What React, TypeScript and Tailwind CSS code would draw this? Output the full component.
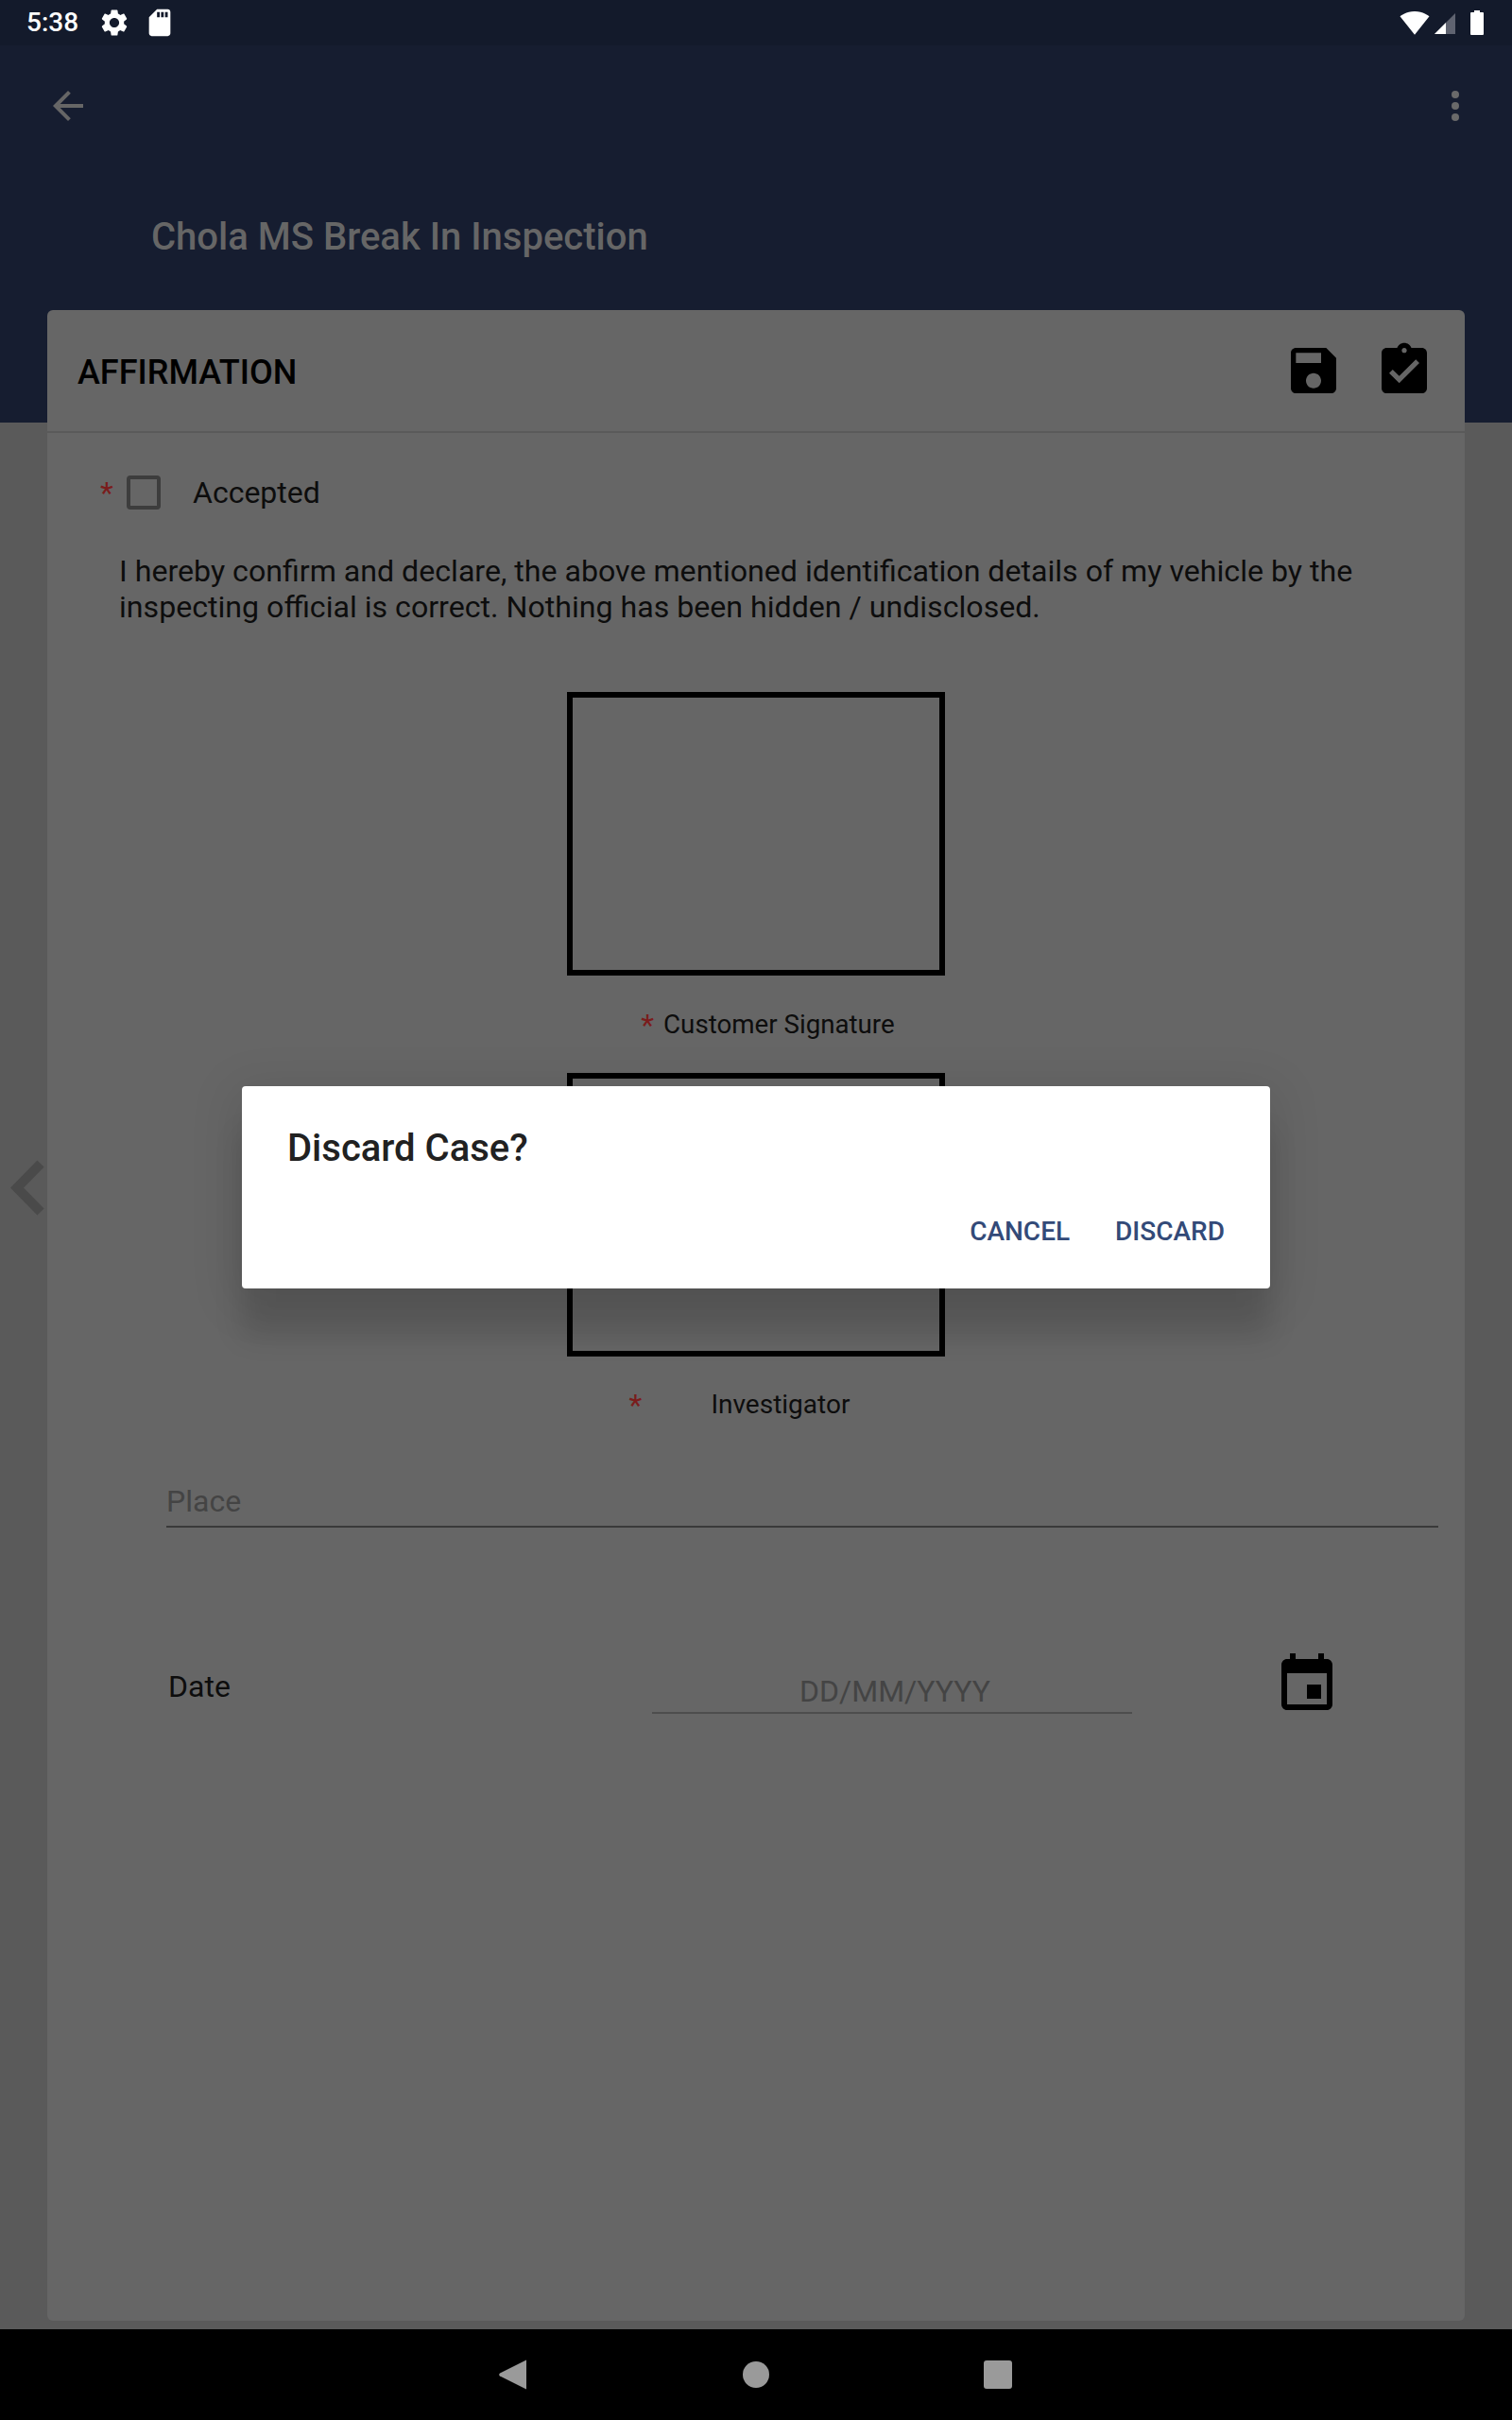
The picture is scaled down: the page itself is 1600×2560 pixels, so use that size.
import React from "react";

const Icon = ({ d, className }: { d: string; className: string }) => (
  <svg viewBox="0 0 24 24" className={className} fill="currentColor">
    <path d={d} />
  </svg>
);

const GEAR =
  "M19.14 12.94c.04-.3.06-.61.06-.94 0-.32-.02-.64-.07-.94l2.03-1.58c.18-.14.23-.41.12-.61l-1.92-3.32c-.12-.22-.37-.29-.59-.22l-2.39.96c-.5-.38-1.03-.7-1.62-.94l-.36-2.54c-.04-.24-.24-.41-.48-.41h-3.84c-.24 0-.43.17-.47.41l-.36 2.54c-.59.24-1.13.57-1.62.94l-2.39-.96c-.22-.08-.47 0-.59.22L2.74 8.87c-.12.21-.08.47.12.61l2.03 1.58c-.05.3-.09.63-.09.94s.02.64.07.94l-2.03 1.58c-.18.14-.23.41-.12.61l1.92 3.32c.12.22.37.29.59.22l2.39-.96c.5.38 1.03.7 1.62.94l.36 2.54c.05.24.24.41.48.41h3.84c.24 0 .44-.17.47-.41l.36-2.54c.59-.24 1.13-.56 1.62-.94l2.39.96c.22.08.47 0 .59-.22l1.92-3.32c.12-.22.07-.47-.12-.61l-2.01-1.58zM12 15.6c-1.98 0-3.6-1.62-3.6-3.6s1.62-3.6 3.6-3.6 3.6 1.62 3.6 3.6-1.62 3.6-3.6 3.6z";
const SD =
  "M18 2h-8L4.02 8 4 20c0 1.1.9 2 2 2h12c1.1 0 2-.9 2-2V4c0-1.1-.9-2-2-2zm-6 6h-2V4h2v4zm3 0h-2V4h2v4zm3 0h-2V4h2v4z";
const WIFI =
  "M12.01 21.49L23.64 7c-.45-.34-4.93-4-11.64-4C5.28 3 .81 6.66.36 7l11.64 14.49.01.01.01-.01z";
const BACK = "M20 11H7.83l5.59-5.59L12 4l-8 8 8 8 1.41-1.41L7.83 13H20v-2z";
const SAVE =
  "M17 3H5c-1.11 0-2 .9-2 2v14c0 1.1.89 2 2 2h14c1.1 0 2-.9 2-2V7l-4-4zm-5 16c-1.66 0-3-1.34-3-3s1.34-3 3-3 3 1.34 3 3-1.34 3-3 3zm3-10H5V5h10v4z";
const ASSIGN =
  "M19 3h-4.18C14.4 1.84 13.3 1 12 1c-1.3 0-2.4.84-2.82 2H5c-1.1 0-2 .9-2 2v14c0 1.1.9 2 2 2h14c1.1 0 2-.9 2-2V5c0-1.1-.9-2-2-2zm-7 0c.55 0 1 .45 1 1s-.45 1-1 1-1-.45-1-1 .45-1 1-1zm-2 14l-4-4 1.41-1.41L10 14.17l6.59-6.59L18 9l-8 8z";
const EVENT =
  "M17 12h-5v5h5v-5zM16 1v2H8V1H6v2H5c-1.11 0-1.99.9-1.99 2L3 19c0 1.1.89 2 2 2h14c1.1 0 2-.9 2-2V5c0-1.1-.9-2-2-2h-1V1h-2zm3 18H5V8h14v11z";

const Star = ({ className = "" }: { className?: string }) => (
  <span className={`text-[#7a1c1c] ${className}`}>*</span>
);

const SignatureBox = () => <div className="w-[400px] h-[300px] border-[6px] border-black" />;

export default function App() {
  return (
    <div className="relative w-[1600px] h-[2560px] flex flex-col overflow-hidden font-[Roboto,sans-serif] bg-[#5a5a5a]">
      {/* status bar */}
      <div className="h-[48px] shrink-0 bg-[#131a2b] flex items-center text-white">
        <span className="ml-[28px] text-[28px] font-medium leading-none">5:38</span>
        <Icon d={GEAR} className="ml-[21px] w-[34px] h-[34px]" />
        <Icon d={SD} className="ml-[14px] w-[34px] h-[34px]" />
        <div className="ml-auto flex items-center">
          <Icon d={WIFI} className="w-[32px] h-[32px]" />
          <svg viewBox="0 0 22 22" className="ml-[5px] w-[22px] h-[22px] mt-[1px]">
            <polygon points="0,22 22,0 22,22" fill="#5f6370" />
            <polygon points="0,22 12,10 12,22" fill="#ffffff" />
          </svg>
          <svg viewBox="0 0 14 26" className="ml-[16px] mr-[30px] w-[14px] h-[26px]">
            <path d="M4 0h6v2h3a1 1 0 0 1 1 1v22a1 1 0 0 1-1 1H1a1 1 0 0 1-1-1V3a1 1 0 0 1 1-1h3z" fill="#ffffff" />
          </svg>
        </div>
      </div>

      {/* app bar */}
      <div className="h-[399px] shrink-0 bg-[#161d30] pt-[40px]">
        <div className="flex items-center justify-between h-[48px] pl-[48px] pr-[56px]">
          <Icon d={BACK} className="w-[48px] h-[48px] text-[#666666]" />
          <div className="flex flex-col gap-[4px] w-[8px]">
            <span className="w-[8px] h-[8px] rounded-full bg-[#6a6a6a]" />
            <span className="w-[8px] h-[8px] rounded-full bg-[#6a6a6a]" />
            <span className="w-[8px] h-[8px] rounded-full bg-[#6a6a6a]" />
          </div>
        </div>
        <div className="mt-[91px] pl-[160px] text-[40px] leading-[48px] font-medium text-[#666666]">
          Chola MS Break In Inspection
        </div>
      </div>

      {/* card */}
      <div className="-mt-[119px] mx-[50px] h-[2127px] rounded-[6px] bg-[#666666] flex flex-col">
        <div className="h-[130px] shrink-0 flex items-center justify-between pl-[32px] pr-[32px] border-b-2 border-[#5a5a5a]">
          <span className="text-[36px] font-medium text-black mt-[3px]">AFFIRMATION</span>
          <div className="flex gap-[32px]">
            <Icon d={SAVE} className="w-[64px] h-[64px] text-black" />
            <Icon d={ASSIGN} className="w-[64px] h-[64px] text-black" />
          </div>
        </div>

        <div className="mt-[45px] ml-[56px] h-[36px] flex items-center text-[32px] text-[#0d0d0d]">
          <Star className="w-[28px] text-[32px] leading-none" />
          <div className="w-[36px] h-[36px] border-[4px] border-[#3d3d3d] rounded-[4px]" />
          <span className="ml-[34px]">Accepted</span>
        </div>

        <p className="mt-[46px] ml-[76px] w-[1340px] text-[32.14px] leading-[38px] text-[#0d0d0d]">
          I hereby confirm and declare, the above mentioned identification details of my vehicle by the inspecting
          official is correct. Nothing has been hidden / undisclosed.
        </p>

        <div className="mt-[71px] flex flex-col items-center">
          <SignatureBox />
          <div className="mt-[32px] h-[40px] pl-[25px] flex items-center text-[27.7px] text-[#0d0d0d]">
            <Star className="mr-[10px] text-[32px]" />
            <span>Customer Signature</span>
          </div>
          <div className="mt-[31px]">
            <SignatureBox />
          </div>
          <div className="mt-[31px] h-[40px] pr-[35px] flex items-center text-[28px] text-[#0d0d0d]">
            <Star className="mr-[73px] text-[32px]" />
            <span>Investigator</span>
          </div>
        </div>

        <div className="mt-[64px] ml-[126px] w-[1346px] h-[46px] border-b-2 border-[#3a3a3a] text-[32px] leading-[36px] text-[#444444]">
          Place
        </div>

        <div className="mt-[130px] ml-[128px] h-[72px] flex items-start">
          <span className="mt-[19px] w-[512px] text-[32px] leading-[38px] text-[#0d0d0d]">Date</span>
          <div className="mt-[21px] w-[508px] h-[46px] border-b-2 border-[#4d4d4d] text-center text-[32px] leading-[44px] text-[#444444] pl-[6px]">
            DD/MM/YYYY
          </div>
          <Icon d={EVENT} className="ml-[149px] w-[72px] h-[72px] text-black" />
        </div>
      </div>

      <div className="flex-1" />

      {/* navigation bar */}
      <div className="h-[96px] shrink-0 bg-black flex items-center justify-center pr-[2px]">
        <svg viewBox="0 0 30 32" className="w-[30px] h-[32px] mr-[228px]">
          <path d="M29 0.5v31L1 17.6a2 2 0 0 1 0-3.2z" fill="#9a9a9a" />
        </svg>
        <span className="w-[28px] h-[28px] rounded-full bg-[#9a9a9a] mr-[227px]" />
        <span className="w-[30px] h-[30px] rounded-[3px] bg-[#9a9a9a]" />
      </div>

      {/* side chevron */}
      <svg viewBox="0 0 36 60" className="absolute left-[11px] top-[1227px] w-[36px] h-[60px]">
        <path d="M32 4 L7 29.5 L32 55" fill="none" stroke="#4a4a4a" strokeWidth="10" />
      </svg>

      {/* dialog */}
      <div className="absolute left-[256px] top-[1149px] w-[1088px] h-[214px] rounded-[4px] bg-white shadow-[0_50px_30px_rgba(0,0,0,0.13),0_10px_50px_10px_rgba(0,0,0,0.09)] flex flex-col">
        <div className="mt-[42px] ml-[48px] text-[40px] leading-[48px] font-medium text-[#212121]">Discard Case?</div>
        <div className="mt-auto mb-[42px] mr-[48px] flex justify-end gap-[48px] text-[28px] leading-[36px] font-medium text-[#334a78]">
          <span>CANCEL</span>
          <span>DISCARD</span>
        </div>
      </div>
    </div>
  );
}
